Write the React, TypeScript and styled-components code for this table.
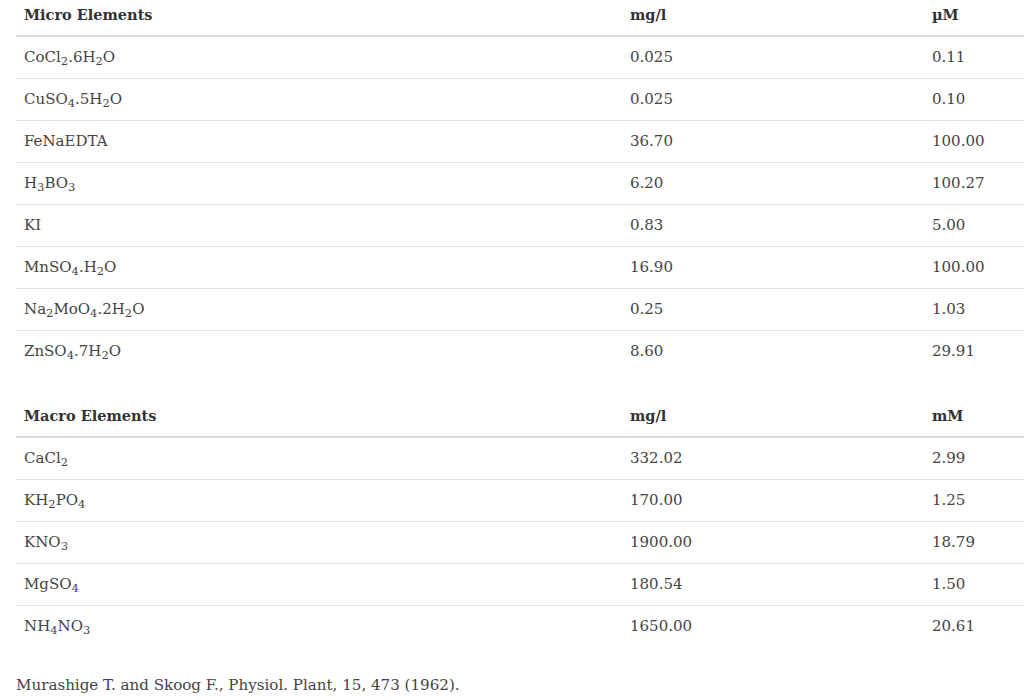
import React from "react";
import styled, { createGlobalStyle } from "styled-components";

const Global = createGlobalStyle`
  html, body { margin: 0; padding: 0; background: #ffffff; }
  body { font-family: "DejaVu Serif", "Liberation Serif", serif; color: #444444; }
`;

const Page = styled.div`
  margin-top: -6px;
  padding: 0 0 0 16px;
  width: 1008px;
`;

const Table = styled.table`
  width: 1008px;
  border-collapse: separate;
  border-spacing: 0;
  table-layout: fixed;
  margin-bottom: 23px;
`;

const HeadCell = styled.th<{ $w: string }>`
  box-sizing: border-box;
  width: ${(p) => p.$w};
  text-align: left;
  font-size: 14.5px;
  font-weight: 700;
  color: #333333;
  padding: 8px 8px;
  line-height: 25px;
  border-bottom: 2px solid #dddddd;
`;

const Row = styled.tr`
  &:first-child td { border-top: none; }
`;

const Cell = styled.td`
  box-sizing: border-box;
  padding: 8px 8px;
  font-size: 15px;
  line-height: 25px;
  border-top: 1px solid #e3e3e3;
  color: #444444;
  white-space: nowrap;
`;

const Sub = styled.sub`
  font-size: 11.5px;
  line-height: 0;
  vertical-align: -3px;
`;

const Footer = styled.p`
  margin: 26px 0 0;
  font-size: 15.1px;
  line-height: 25px;
  color: #444444;
`;

const formula = (s: string) => {
  const parts: React.ReactNode[] = [];
  let i = 0;
  let k = 0;
  while (i < s.length) {
    if (s[i] === "_") {
      let j = i + 1;
      while (j < s.length && /[0-9]/.test(s[j])) j++;
      parts.push(<Sub key={k++}>{s.slice(i + 1, j)}</Sub>);
      i = j;
    } else {
      let j = i;
      while (j < s.length && s[j] !== "_") j++;
      parts.push(<React.Fragment key={k++}>{s.slice(i, j)}</React.Fragment>);
      i = j;
    }
  }
  return parts;
};

type Item = [string, string, string];

const micro: Item[] = [
  ["CoCl_2.6H_2O", "0.025", "0.11"],
  ["CuSO_4.5H_2O", "0.025", "0.10"],
  ["FeNaEDTA", "36.70", "100.00"],
  ["H_3BO_3", "6.20", "100.27"],
  ["KI", "0.83", "5.00"],
  ["MnSO_4.H_2O", "16.90", "100.00"],
  ["Na_2MoO_4.2H_2O", "0.25", "1.03"],
  ["ZnSO_4.7H_2O", "8.60", "29.91"],
];

const macro: Item[] = [
  ["CaCl_2", "332.02", "2.99"],
  ["KH_2PO_4", "170.00", "1.25"],
  ["KNO_3", "1900.00", "18.79"],
  ["MgSO_4", "180.54", "1.50"],
  ["NH_4NO_3", "1650.00", "20.61"],
];

const DataTable = ({ title, unit, rows }: { title: string; unit: string; rows: Item[] }) => (
  <Table>
    <thead>
      <tr>
        <HeadCell $w="606px">{title}</HeadCell>
        <HeadCell $w="302px">mg/l</HeadCell>
        <HeadCell $w="100px">{unit}</HeadCell>
      </tr>
    </thead>
    <tbody>
      {rows.map((r) => (
        <Row key={r[0]}>
          <Cell>{formula(r[0])}</Cell>
          <Cell>{r[1]}</Cell>
          <Cell>{r[2]}</Cell>
        </Row>
      ))}
    </tbody>
  </Table>
);

export default function App() {
  return (
    <>
      <Global />
      <Page>
        <DataTable title="Micro Elements" unit="µM" rows={micro} />
        <DataTable title="Macro Elements" unit="mM" rows={macro} />
        <Footer>Murashige T. and Skoog F., Physiol. Plant, 15, 473 (1962).</Footer>
      </Page>
    </>
  );
}
